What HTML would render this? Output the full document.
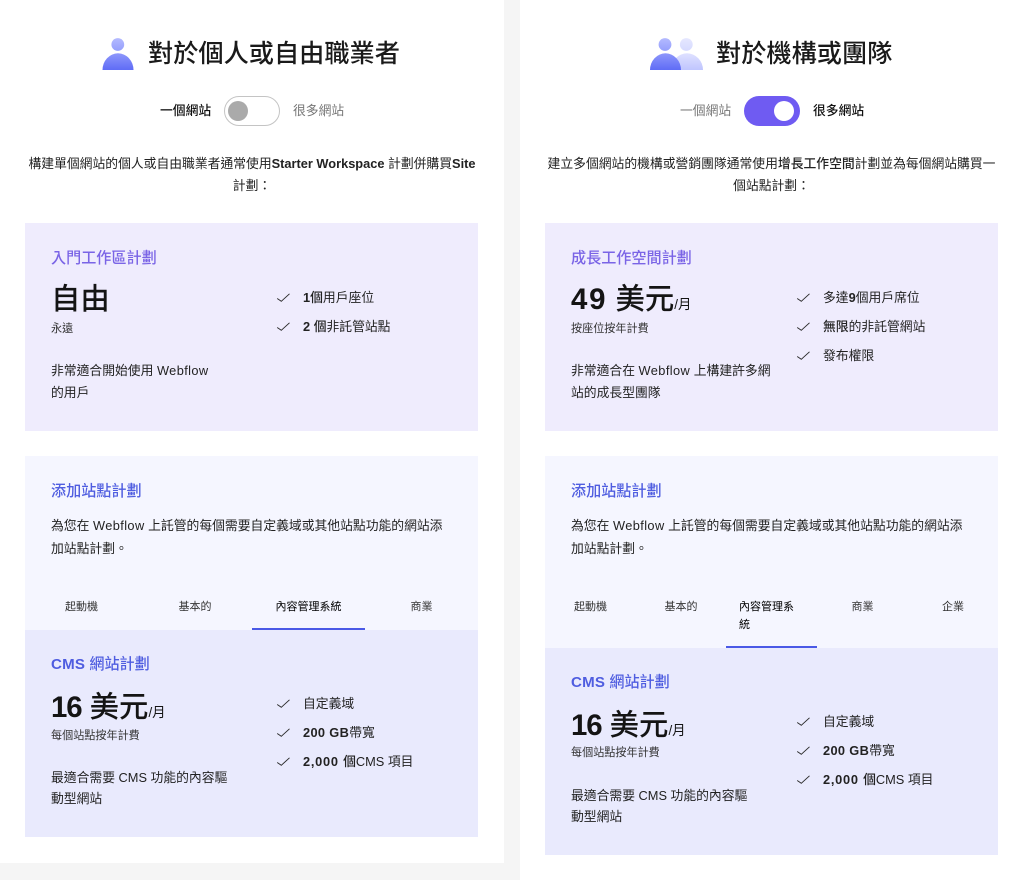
<!DOCTYPE html>
<html lang="zh-Hant"><head><meta charset="utf-8"><title>Plans</title>
<style>
html,body{margin:0;padding:0;width:1023px;height:880px;overflow:hidden;background:#f5f5f5}
body{position:relative;font-family:"Liberation Sans","Noto Sans CJK TC",sans-serif;color:#222;font-size:12.8px}
.p,.b,.t,svg{position:absolute}
.p{background:#fff;top:0}
.t{white-space:nowrap;line-height:20px;height:20px;margin-top:1px}
.c{text-align:center}
.l{letter-spacing:.4px}
.h{font-size:25.2px;color:#1a1a1a;font-weight:500;line-height:30px;height:30px}
.g{color:#777}.m{font-weight:500;color:#111}
.s{font-size:15.1px;font-weight:500}
.pu{color:#7a64e6}.bl{color:#4f5de0}
.pr{font-size:29.4px;font-weight:500;color:#141414;line-height:36px;height:36px}
.pr b{font-weight:700}
.pr small{font-size:13.4px;font-weight:400}
.x{font-size:11.1px;color:#333}
.tab{font-size:11px;color:#333}
.on{color:#000}
b{font-weight:700}
.k{font-weight:500}
.ck{fill:none;stroke:#2a2a2a;stroke-width:.95}
</style></head><body>
<div class="p" style="left:0;width:504px;height:863px"></div>
<div class="p" style="left:520px;width:503px;height:880px"></div>

<svg style="left:100px;top:36px" width="36" height="36"><defs><linearGradient id="a" x1="0" y1="0" x2="0" y2="1"><stop offset="0" stop-color="#b4baff"/><stop offset="1" stop-color="#959ffc"/></linearGradient><linearGradient id="d" x1="0" y1="0" x2="0" y2="1"><stop offset="0" stop-color="#8e97fb"/><stop offset="1" stop-color="#5f6cf6"/></linearGradient></defs><circle cx="17.800" cy="8.500" r="6.400" fill="url(#a)"/><path d="M2.500 34A15.500 16.700 0 0 1 33.500 34Z" fill="url(#d)"/></svg>
<div class="t h" style="left:148px;top:38px">對於個人或自由職業者</div>
<div class="t m" style="left:160px;top:100px">一個網站</div>
<div class="b" style="left:224px;top:96px;width:54px;height:28px;border:1px solid #c4c4c4;border-radius:15px;background:#fff"></div>
<div class="b" style="left:228px;top:101px;width:20px;height:20px;border-radius:50%;background:#aaa"></div>
<div class="t g" style="left:293px;top:100px">很多網站</div>
<div class="t c" style="left:0;width:504px;top:153px">構建單個網站的個人或自由職業者通常使用<b>Starter Workspace</b> 計劃併購買<b>Site</b></div>
<div class="t c" style="left:0;width:504px;top:175px">計劃：</div>

<div class="b" style="left:25px;top:223px;width:453px;height:208px;background:#efecfd"></div>
<div class="t s pu" style="left:51px;top:248px">入門工作區計劃</div>
<div class="t pr" style="left:51px;top:281px">自由</div>
<div class="t x" style="left:51px;top:318px">永遠</div>
<div class="t" style="left:51px;top:360px">非常適合開始使用 <span class="l">Webflow</span></div>
<div class="t" style="left:51px;top:382px">的用戶</div>
<svg style="left:276px;top:292px" width="15" height="11"><path d="M1.200 6.500L5.300 9.300L13.500 1.800" class="ck"/></svg>
<div class="t" style="left:303px;top:287px"><b>1</b><span class="k">個</span>用戶座位</div>
<svg style="left:276px;top:321px" width="15" height="11"><path d="M1.200 6.500L5.300 9.300L13.500 1.800" class="ck"/></svg>
<div class="t" style="left:303px;top:316px"><b>2 </b><span class="k">個</span>非託管站點</div>

<div class="b" style="left:25px;top:456px;width:453px;height:174px;background:#f5f6ff"></div>
<div class="t s bl" style="left:51px;top:481px">添加站點計劃</div>
<div class="t" style="left:51px;top:515px">為您在 <span class="l">Webflow</span> 上託管的每個需要自定義域或其他站點功能的網站添</div>
<div class="t" style="left:51px;top:538px">加站點計劃。</div>
<div class="t c tab" style="left:25px;width:113px;top:596px">起動機</div>
<div class="t c tab" style="left:138px;width:114px;top:596px">基本的</div>
<div class="t c tab on" style="left:252px;width:113px;top:596px">內容管理系統</div>
<div class="t c tab" style="left:365px;width:113px;top:596px">商業</div>
<div class="b" style="left:25px;top:630px;width:453px;height:207px;background:#e9eafd"></div>
<div class="b" style="left:252px;top:628px;width:113px;height:2px;background:#4a59e6"></div>
<div class="t s bl" style="left:51px;top:654px"><span style="font-weight:700;letter-spacing:.2px">CMS</span> 網站計劃</div>
<div class="t pr" style="left:51px;top:689px"><b style="letter-spacing:-1.100px">16</b> 美元<small>/月</small></div>
<div class="t x" style="left:51px;top:725px">每個站點按年計費</div>
<div class="t" style="left:51px;top:767px">最適合需要 CMS 功能的內容驅</div>
<div class="t" style="left:51px;top:788px">動型網站</div>
<svg style="left:276px;top:698px" width="15" height="11"><path d="M1.200 6.500L5.300 9.300L13.500 1.800" class="ck"/></svg>
<div class="t" style="left:303px;top:693px">自定義域</div>
<svg style="left:276px;top:727px" width="15" height="11"><path d="M1.200 6.500L5.300 9.300L13.500 1.800" class="ck"/></svg>
<div class="t" style="left:303px;top:722px"><b style="letter-spacing:.35px">200 GB</b>帶寬</div>
<svg style="left:276px;top:756px" width="15" height="11"><path d="M1.200 6.500L5.300 9.300L13.500 1.800" class="ck"/></svg>
<div class="t" style="left:303px;top:751px"><b style="letter-spacing:.75px">2,000 </b><span class="k">個</span>CMS 項目</div>

<svg style="left:648px;top:36px" width="58" height="36"><defs><linearGradient id="e" x1="0" y1="0" x2="0" y2="1"><stop offset="0" stop-color="#e6e8ff"/><stop offset="1" stop-color="#d6daff"/></linearGradient><linearGradient id="f" x1="0" y1="0" x2="0" y2="1"><stop offset="0" stop-color="#dfe1ff"/><stop offset="1" stop-color="#bfc5fe"/></linearGradient></defs><circle cx="38.300" cy="8.500" r="6.400" fill="url(#e)"/><path d="M23 34A16 16.700 0 0 1 55 34Z" fill="url(#f)"/><circle cx="17" cy="8.500" r="6.400" fill="url(#a)"/><path d="M2 34A15.500 16.700 0 0 1 33 34Z" fill="url(#d)"/></svg>
<div class="t h" style="left:716px;top:38px">對於機構或團隊</div>
<div class="t g" style="left:680px;top:100px">一個網站</div>
<div class="b" style="left:744px;top:96px;width:56px;height:30px;border-radius:15px;background:#6f5bf2"></div>
<div class="b" style="left:774px;top:101px;width:20px;height:20px;border-radius:50%;background:#fff"></div>
<div class="t m" style="left:813px;top:100px">很多網站</div>
<div class="t c" style="left:520px;width:503px;top:153px">建立多個網站的機構或營銷團隊通常使用<span class="k">增長工作空間</span>計劃並為每個網站購買一</div>
<div class="t c" style="left:520px;width:503px;top:175px">個站點計劃：</div>

<div class="b" style="left:545px;top:223px;width:453px;height:208px;background:#efecfd"></div>
<div class="t s pu" style="left:571px;top:248px">成長工作空間計劃</div>
<div class="t pr" style="left:571px;top:281px"><b style="letter-spacing:1.800px">49</b> 美元<small>/月</small></div>
<div class="t x" style="left:571px;top:318px">按座位按年計費</div>
<div class="t" style="left:571px;top:360px">非常適合在 <span class="l">Webflow</span> 上構建許多網</div>
<div class="t" style="left:571px;top:382px">站的成長型團隊</div>
<svg style="left:796px;top:292px" width="15" height="11"><path d="M1.200 6.500L5.300 9.300L13.500 1.800" class="ck"/></svg>
<div class="t" style="left:823px;top:287px">多達<b>9</b>個用戶席位</div>
<svg style="left:796px;top:321px" width="15" height="11"><path d="M1.200 6.500L5.300 9.300L13.500 1.800" class="ck"/></svg>
<div class="t" style="left:823px;top:316px"><span class="k">無限</span>的非託管網站</div>
<svg style="left:796px;top:350px" width="15" height="11"><path d="M1.200 6.500L5.300 9.300L13.500 1.800" class="ck"/></svg>
<div class="t" style="left:823px;top:345px">發布權限</div>

<div class="b" style="left:545px;top:456px;width:453px;height:192px;background:#f5f6ff"></div>
<div class="t s bl" style="left:571px;top:481px">添加站點計劃</div>
<div class="t" style="left:571px;top:515px">為您在 <span class="l">Webflow</span> 上託管的每個需要自定義域或其他站點功能的網站添</div>
<div class="t" style="left:571px;top:538px">加站點計劃。</div>
<div class="t c tab" style="left:545px;width:91px;top:596px">起動機</div>
<div class="t c tab" style="left:636px;width:90px;top:596px">基本的</div>
<div class="t tab on" style="left:739px;top:596px">內容管理系</div>
<div class="t tab on" style="left:739px;top:614px">統</div>
<div class="t c tab" style="left:817px;width:91px;top:596px">商業</div>
<div class="t c tab" style="left:908px;width:90px;top:596px">企業</div>
<div class="b" style="left:545px;top:648px;width:453px;height:207px;background:#e9eafd"></div>
<div class="b" style="left:726px;top:646px;width:91px;height:2px;background:#4a59e6"></div>
<div class="t s bl" style="left:571px;top:672px"><span style="font-weight:700;letter-spacing:.2px">CMS</span> 網站計劃</div>
<div class="t pr" style="left:571px;top:707px"><b style="letter-spacing:-1.100px">16</b> 美元<small>/月</small></div>
<div class="t x" style="left:571px;top:742px">每個站點按年計費</div>
<div class="t" style="left:571px;top:785px">最適合需要 CMS 功能的內容驅</div>
<div class="t" style="left:571px;top:806px">動型網站</div>
<svg style="left:796px;top:716px" width="15" height="11"><path d="M1.200 6.500L5.300 9.300L13.500 1.800" class="ck"/></svg>
<div class="t" style="left:823px;top:711px">自定義域</div>
<svg style="left:796px;top:745px" width="15" height="11"><path d="M1.200 6.500L5.300 9.300L13.500 1.800" class="ck"/></svg>
<div class="t" style="left:823px;top:740px"><b style="letter-spacing:.35px">200 GB</b>帶寬</div>
<svg style="left:796px;top:774px" width="15" height="11"><path d="M1.200 6.500L5.300 9.300L13.500 1.800" class="ck"/></svg>
<div class="t" style="left:823px;top:769px"><b style="letter-spacing:.75px">2,000 </b><span class="k">個</span>CMS 項目</div>
</body></html>
